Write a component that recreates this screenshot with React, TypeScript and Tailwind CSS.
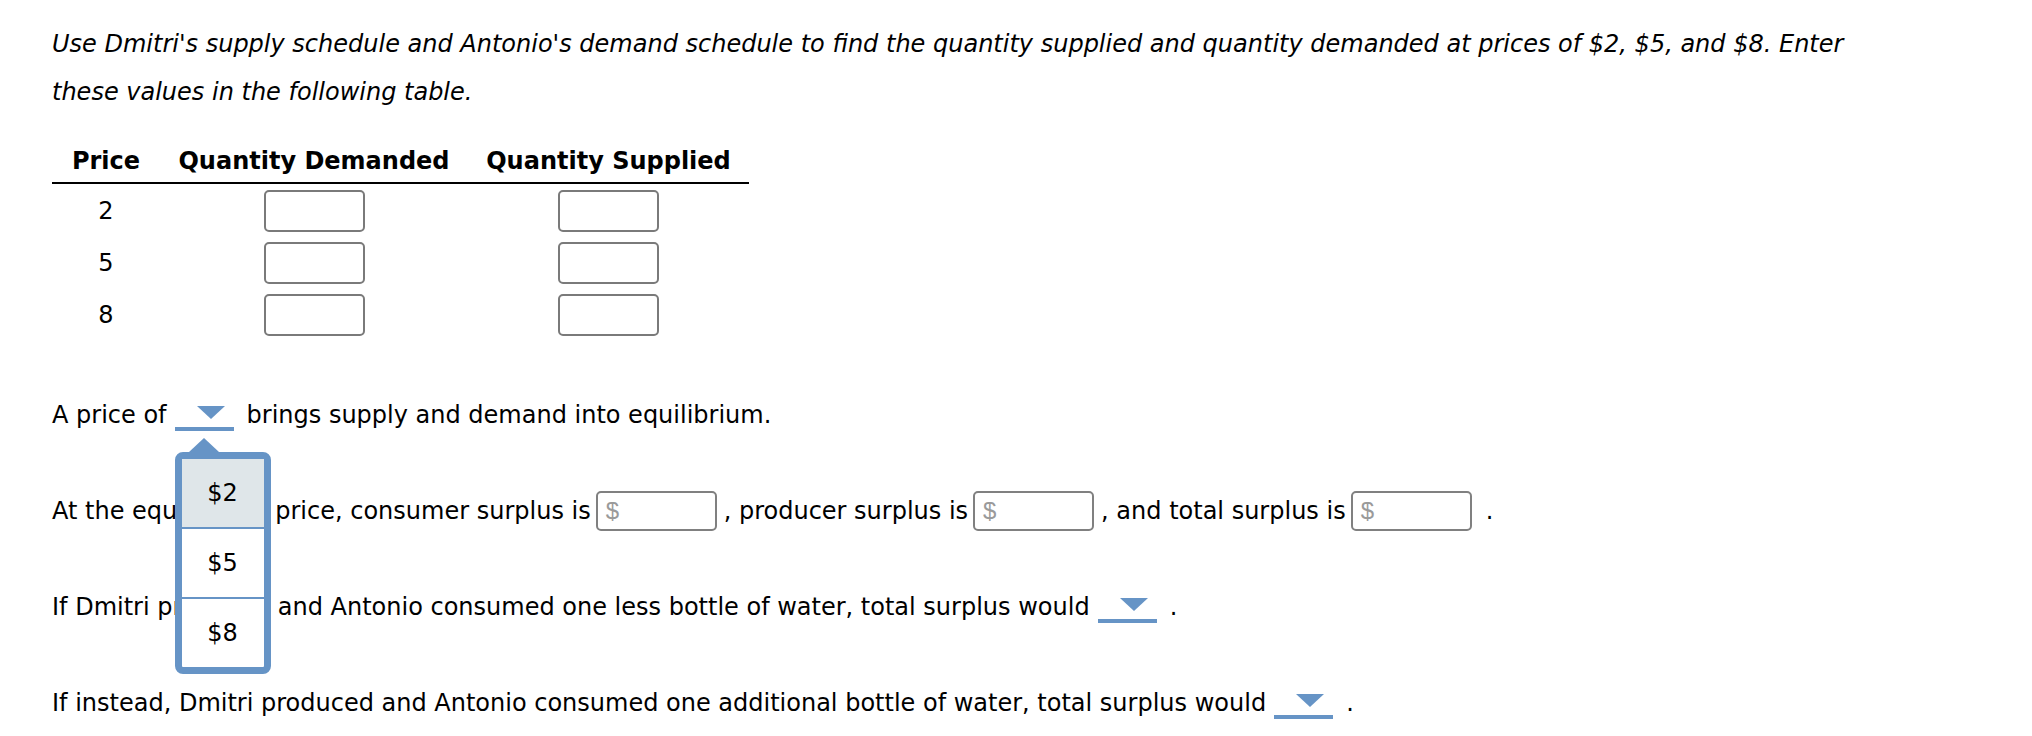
import React from 'react';

function Dropdown({ open = false }: { open?: boolean }) {
  return (
    <span className="relative inline-block align-[-8px] ml-[8px] mr-[13px] w-[59px] h-[25px] border-b-[4px] border-[#6694c6]">
      {/* down arrow */}
      <span className="absolute left-[22px] top-0 w-0 h-0 border-l-[14px] border-r-[14px] border-t-[13px] border-l-transparent border-r-transparent border-t-[#6694c6]" />
      {open && (
        <>
          <span className="absolute left-[14px] top-[32px] z-10 w-0 h-0 border-l-[15px] border-r-[15px] border-b-[14px] border-l-transparent border-r-transparent border-b-[#6694c6]" />
          <span className="absolute left-0 top-[46px] z-10 flex w-[96px] flex-col rounded-[8px] border-[7px] border-[#6694c6] bg-white">
            <span className="flex h-[68px] items-center justify-center bg-[#dfe6e9]">$2</span>
            <span className="h-[2px] bg-[#6694c6]" />
            <span className="flex h-[68px] items-center justify-center">$5</span>
            <span className="h-[2px] bg-[#6694c6]" />
            <span className="flex h-[68px] items-center justify-center">$8</span>
          </span>
        </>
      )}
    </span>
  );
}

function DollarBox() {
  return (
    <span className="inline-block ml-[5px] h-[40px] w-[121px] rounded-[5px] border-2 border-[#808080] pl-[8px] leading-[36px] font-['Liberation_Sans',Arial,sans-serif] text-[#9a9a9a]">
      $
    </span>
  );
}

function Box() {
  return <div className="h-[42px] w-[101px] rounded-[5px] border-2 border-[#7a7a7a] bg-white" />;
}

export default function App() {
  const rows = ['2', '5', '8'];

  return (
    <div className="min-h-[736px] w-full bg-white text-black font-['DejaVu_Sans',Verdana,sans-serif] text-[24px]">
      <div className="pl-[52px] pt-[20px]">
        {/* instructions */}
        <p className="italic leading-[48px]">
          Use Dmitri's supply schedule and Antonio's demand schedule to find the quantity supplied and quantity demanded at prices of $2, $5, and $8. Enter
          <br />
          these values in the following table.
        </p>

        {/* schedule table */}
        <div className="mt-[30px] w-[697px]">
          <div className="grid grid-cols-[108px_308px_281px] border-b-2 border-black pb-[6px] font-bold leading-[30px]">
            <div className="text-center">Price</div>
            <div className="text-center">Quantity Demanded</div>
            <div className="text-center">Quantity Supplied</div>
          </div>
          <div className="flex flex-col gap-[10px] pt-[6px]">
            {rows.map((r) => (
              <div key={r} className="grid grid-cols-[108px_308px_281px] items-center">
                <div className="text-center">{r}</div>
                <div className="flex justify-center">
                  <Box />
                </div>
                <div className="flex justify-center">
                  <Box />
                </div>
              </div>
            ))}
          </div>
        </div>

        {/* questions */}
        <div className="mt-[55px] flex flex-col gap-[48px] leading-[48px]">
          <p>
            A price of
            <Dropdown open />
            brings supply and demand into equilibrium.
          </p>
          <p>
            At the equilibrium price, consumer surplus is
            <DollarBox />
            <span className="ml-[7px]">, producer surplus is</span>
            <DollarBox />
            <span className="ml-[7px]">, and total surplus is</span>
            <DollarBox />
            <span className="ml-[14px]">.</span>
          </p>
          <p>
            If Dmitri produced and Antonio consumed one less bottle of water, total surplus would
            <Dropdown />.
          </p>
          <p>
            If instead, Dmitri produced and Antonio consumed one additional bottle of water, total surplus would
            <Dropdown />.
          </p>
        </div>
      </div>
    </div>
  );
}
